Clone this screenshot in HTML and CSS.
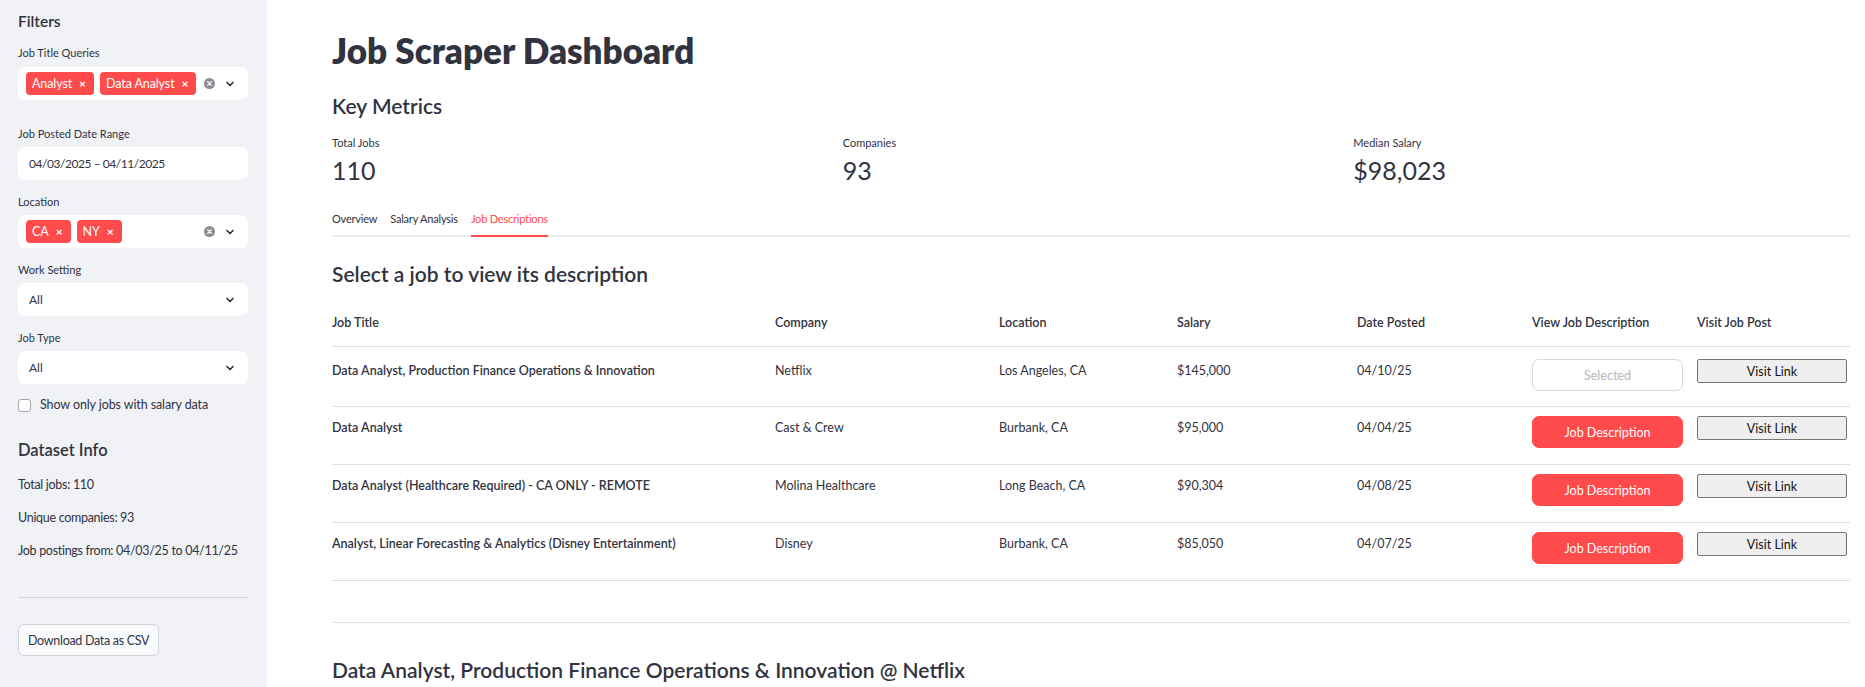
FILE: index.html
```html
<!DOCTYPE html>
<html lang="en">
<head>
<meta charset="utf-8">
<title>Job Scraper Dashboard</title>
<link rel="stylesheet" href="styles.css">
</head>
<body>
<div class="app">
  <aside class="sidebar">
    <h2 class="side-title">Filters</h2>

    <div class="field">
      <div class="field-label">Job Title Queries</div>
      <div class="control multi">
        <div class="tags">
          <span class="tag">Analyst<span class="tag-x">×</span></span>
          <span class="tag">Data Analyst<span class="tag-x">×</span></span>
        </div>
        <div class="icons">
          <svg class="clear" width="11" height="11" viewBox="0 0 12 12"><circle cx="6" cy="6" r="6" fill="#8b8c94"/><path d="M4 4l4 4M8 4l-4 4" stroke="#fff" stroke-width="1.4" stroke-linecap="round"/></svg>
          <svg class="chev" width="10" height="10" viewBox="0 0 10 10"><path d="M2 3.5l3 3 3-3" fill="none" stroke="#31333f" stroke-width="1.7" stroke-linecap="round" stroke-linejoin="round"/></svg>
        </div>
      </div>
    </div>

    <div class="field field-wide">
      <div class="field-label">Job Posted Date Range</div>
      <div class="control"><span class="date-text">04/03/2025 – 04/11/2025</span></div>
    </div>

    <div class="field">
      <div class="field-label">Location</div>
      <div class="control multi">
        <div class="tags">
          <span class="tag">CA<span class="tag-x">×</span></span>
          <span class="tag">NY<span class="tag-x">×</span></span>
        </div>
        <div class="icons">
          <svg class="clear" width="11" height="11" viewBox="0 0 12 12"><circle cx="6" cy="6" r="6" fill="#8b8c94"/><path d="M4 4l4 4M8 4l-4 4" stroke="#fff" stroke-width="1.4" stroke-linecap="round"/></svg>
          <svg class="chev" width="10" height="10" viewBox="0 0 10 10"><path d="M2 3.5l3 3 3-3" fill="none" stroke="#31333f" stroke-width="1.7" stroke-linecap="round" stroke-linejoin="round"/></svg>
        </div>
      </div>
    </div>

    <div class="field">
      <div class="field-label">Work Setting</div>
      <div class="control select">
        <span>All</span>
        <svg class="chev" width="10" height="10" viewBox="0 0 10 10"><path d="M2 3.5l3 3 3-3" fill="none" stroke="#31333f" stroke-width="1.7" stroke-linecap="round" stroke-linejoin="round"/></svg>
      </div>
    </div>

    <div class="field">
      <div class="field-label">Job Type</div>
      <div class="control select">
        <span>All</span>
        <svg class="chev" width="10" height="10" viewBox="0 0 10 10"><path d="M2 3.5l3 3 3-3" fill="none" stroke="#31333f" stroke-width="1.7" stroke-linecap="round" stroke-linejoin="round"/></svg>
      </div>
    </div>

    <label class="check">
      <span class="box"></span>
      <span>Show only jobs with salary data</span>
    </label>

    <h2 class="side-title info-title">Dataset Info</h2>
    <p class="info">Total jobs: 110</p>
    <p class="info">Unique companies: 93</p>
    <p class="info">Job postings from: 04/03/25 to 04/11/25</p>

    <hr class="side-rule">

    <button class="download">Download Data as CSV</button>
  </aside>

  <main class="main">
    <h1 class="title">Job Scraper Dashboard</h1>
    <h3 class="heading">Key Metrics</h3>

    <div class="metrics">
      <div class="metric">
        <div class="metric-label">Total Jobs</div>
        <div class="metric-value">110</div>
      </div>
      <div class="metric">
        <div class="metric-label">Companies</div>
        <div class="metric-value">93</div>
      </div>
      <div class="metric">
        <div class="metric-label">Median Salary</div>
        <div class="metric-value">$98,023</div>
      </div>
    </div>

    <div class="tabs">
      <span class="tab">Overview</span>
      <span class="tab">Salary Analysis</span>
      <span class="tab active">Job Descriptions</span>
    </div>

    <h3 class="heading heading-select">Select a job to view its description</h3>

    <div class="table">
      <div class="row head">
        <div class="cell">Job Title</div>
        <div class="cell">Company</div>
        <div class="cell">Location</div>
        <div class="cell">Salary</div>
        <div class="cell">Date Posted</div>
        <div class="cell">View Job Description</div>
        <div class="cell">Visit Job Post</div>
      </div>

      <div class="row first">
        <div class="cell strong">Data Analyst, Production Finance Operations &amp; Innovation</div>
        <div class="cell">Netflix</div>
        <div class="cell">Los Angeles, CA</div>
        <div class="cell">$145,000</div>
        <div class="cell">04/10/25</div>
        <div class="cell btn-cell"><button class="desc-btn selected">Selected</button></div>
        <div class="cell btn-cell"><button class="visit-btn">Visit Link</button></div>
      </div>

      <div class="row">
        <div class="cell strong">Data Analyst</div>
        <div class="cell">Cast &amp; Crew</div>
        <div class="cell">Burbank, CA</div>
        <div class="cell">$95,000</div>
        <div class="cell">04/04/25</div>
        <div class="cell btn-cell"><button class="desc-btn">Job Description</button></div>
        <div class="cell btn-cell"><button class="visit-btn">Visit Link</button></div>
      </div>

      <div class="row">
        <div class="cell strong">Data Analyst (Healthcare Required) - CA ONLY - REMOTE</div>
        <div class="cell">Molina Healthcare</div>
        <div class="cell">Long Beach, CA</div>
        <div class="cell">$90,304</div>
        <div class="cell">04/08/25</div>
        <div class="cell btn-cell"><button class="desc-btn">Job Description</button></div>
        <div class="cell btn-cell"><button class="visit-btn">Visit Link</button></div>
      </div>

      <div class="row">
        <div class="cell strong">Analyst, Linear Forecasting &amp; Analytics (Disney Entertainment)</div>
        <div class="cell">Disney</div>
        <div class="cell">Burbank, CA</div>
        <div class="cell">$85,050</div>
        <div class="cell">04/07/25</div>
        <div class="cell btn-cell"><button class="desc-btn">Job Description</button></div>
        <div class="cell btn-cell"><button class="visit-btn">Visit Link</button></div>
      </div>
    </div>

    <hr class="main-rule">

    <h3 class="heading heading-detail">Data Analyst, Production Finance Operations &amp; Innovation @ Netflix</h3>
  </main>
</div>
</body>
</html>
```

FILE: styles.css
```css
* { box-sizing: border-box; }

html, body {
  margin: 0;
  padding: 0;
  height: 100%;
  overflow: hidden;
  background: #ffffff;
  color: #31333f;
  font-family: Lato, "Noto Sans", sans-serif;
}

.app {
  display: flex;
  height: 100vh;
}

/* ---------- Sidebar ---------- */
.sidebar {
  width: 267px;
  flex: 0 0 267px;
  background: #f0f2f6;
  padding: 12px 19px 0 18px;
}

.side-title {
  margin: 0;
  font-size: 15.5px;
  line-height: 19px;
  font-weight: 600;
}

.field { display: flex; flex-direction: column; }

.field-label {
  margin-top: 15px;
  font-size: 11px;
  line-height: 14px;
}

.field .control { margin-top: 6px; }
.field:first-of-type .control { margin-top: 7px; }
.field-wide .field-label { margin-top: 27px; }

.control {
  height: 33px;
  background: #ffffff;
  border-radius: 7px;
  display: flex;
  align-items: center;
  padding: 0 11px;
  font-size: 12px;
}

.date-text { letter-spacing: -0.45px; }

.control.select {
  justify-content: space-between;
  padding-right: 13px;
}

.control.multi {
  padding: 0 13px 0 8px;
  justify-content: space-between;
}

.tags { display: flex; gap: 6px; }

.tag {
  display: inline-flex;
  align-items: center;
  height: 23px;
  padding: 0 8px 0 6px;
  background: #ff4b4b;
  color: #ffffff;
  border-radius: 4px;
  font-size: 12.5px;
  letter-spacing: -0.1px;
}

.tag-x {
  margin-left: 7px;
  font-size: 12px;
  font-weight: 700;
}

.icons {
  display: flex;
  align-items: center;
  gap: 10px;
}

.chev { display: block; }

.check {
  margin-top: 13px;
  display: flex;
  align-items: center;
  gap: 9px;
  font-size: 12.5px;
  line-height: 16px;
  letter-spacing: -0.1px;
}

.check .box {
  width: 13px;
  height: 13px;
  background: #ffffff;
  border: 1px solid #a6a7ad;
  border-radius: 3px;
}

.info-title {
  margin-top: 27px;
  font-size: 16.5px;
  line-height: 20px;
}

.info {
  margin: 17px 0 0;
  font-size: 12.5px;
  line-height: 16px;
  white-space: nowrap;
  letter-spacing: -0.3px;
}
.info-title + .info { margin-top: 17px; }

.side-rule {
  margin: 38px 0 0;
  border: 0;
  border-top: 1px solid #d2d4da;
}

.download {
  margin-top: 26px;
  height: 32px;
  padding: 0 9px;
  background: #f9fafc;
  border: 1px solid #d3d4d9;
  border-radius: 6px;
  color: #31333f;
  font-family: inherit;
  font-size: 12.5px;
  letter-spacing: -0.3px;
}

/* ---------- Main ---------- */
.main {
  flex: 1;
  padding: 29px 15px 0 65px;
  min-width: 0;
}

.title {
  margin: 0;
  font-size: 35px;
  line-height: 42px;
  font-weight: 800;
}

.heading {
  margin: 22px 0 0;
  font-size: 21px;
  line-height: 25px;
  font-weight: 600;
}

.metrics {
  display: grid;
  grid-template-columns: repeat(3, 1fr);
  gap: 14px;
}

.metric-label {
  margin-top: 18px;
  font-size: 11px;
  line-height: 14px;
}

.metric-value {
  margin-top: 5px;
  font-size: 25px;
  line-height: 30px;
}

.tabs {
  margin-top: 27px;
  display: flex;
  gap: 13px;
  border-bottom: 2px solid #ebebed;
}

.tab {
  font-size: 11px;
  line-height: 14px;
  letter-spacing: -0.2px;
  padding-bottom: 9px;
  margin-bottom: -2px;
  border-bottom: 2px solid transparent;
}

.tab.active {
  color: #ff4b4b;
  border-bottom-color: #ff4b4b;
}

.heading-select { margin-top: 24px; }

.table { margin-top: 29px; }

.row {
  display: grid;
  grid-template-columns: 429px 210px 164px 166px 161px 151px 153px;
  column-gap: 14px;
  align-items: start;
  border-bottom: 1px solid #dedfe2;
  padding: 9px 0 16px;
  font-size: 12.5px;
  line-height: 16px;
}

.row .cell { padding-top: 4px; }
.row .btn-cell { padding-top: 0; }

.row.head {
  padding: 0 0 15px;
  font-weight: 600;
}
.row.head .cell { padding-top: 0; }

.row.first { padding-top: 12px; padding-bottom: 15px; }

.strong { font-weight: 600; }

.desc-btn {
  width: 151px;
  height: 32px;
  border: 1px solid #ff4b4b;
  background: #ff4b4b;
  color: #ffffff;
  border-radius: 7px;
  font-family: inherit;
  font-size: 12.5px;
}

.desc-btn.selected {
  background: #ffffff;
  border-color: #d8d9dd;
  color: #b4b5bb;
}

.visit-btn {
  width: 150px;
  height: 24px;
  background: #efefef;
  border: 1px solid #767676;
  border-radius: 2px;
  color: #111111;
  font-family: inherit;
  font-size: 12.5px;
}

.main-rule {
  margin: 41px 0 0;
  border: 0;
  border-top: 1px solid #dedfe2;
}

.heading-detail { margin-top: 34px; }
```
